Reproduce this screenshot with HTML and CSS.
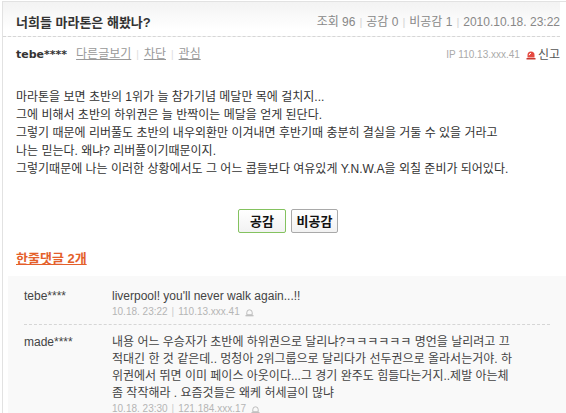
FILE: index.html
```html
<!DOCTYPE html>
<html lang="ko">
<head>
<meta charset="utf-8">
<title>너희들 마라톤은 해봤나?</title>
<link rel="stylesheet" href="styles.css">
</head>
<body>
<div class="page">
  <div class="head">
    <h1 class="title">너희들 마라톤은 해봤나?</h1>
    <div class="stats">조회 96<span class="sep">|</span>공감 0<span class="sep">|</span>비공감 1<span class="sep">|</span>2010.10.18. 23:22</div>
  </div>
  <div class="info">
    <div class="author"><b class="nick">tebe****</b><a class="lnk" href="#">다른글보기</a><span class="bar">|</span><a class="lnk" href="#">차단</a><span class="bar">|</span><a class="lnk" href="#">관심</a></div>
    <div class="ip">IP 110.13.xxx.41<svg class="siren" width="10" height="10" viewBox="0 0 10 10"><path d="M1.5 7.5V5a3.5 3.5 0 0 1 7 0v2.5z" fill="#e5483f"/><path d="M3.2 5.2a1.8 1.8 0 0 1 1.8-1.8" stroke="#fff" stroke-width="1" fill="none"/><rect x="0.5" y="8" width="9" height="1.5" fill="#c83a32"/></svg><a class="report" href="#">신고</a></div>
  </div>
  <div class="content">
    마라톤을 보면 초반의 1위가 늘 참가기념 메달만 목에 걸치지...<br>
    그에 비해서 초반의 하위권은 늘 반짝이는 메달을 얻게 된단다.<br>
    그렇기 때문에 리버풀도 초반의 내우외환만 이겨내면 후반기때 충분히 결실을 거둘 수 있을 거라고<br>
    나는 믿는다. 왜냐? 리버풀이기때문이지.<br>
    그렇기때문에 나는 이러한 상황에서도 그 어느 콥들보다 여유있게 Y.N.W.A을 외칠 준비가 되어있다.
  </div>
  <div class="vote">
    <button class="btn btn-agree" type="button">공감</button>
    <button class="btn btn-dis" type="button">비공감</button>
  </div>
  <div class="cmt-head"><a class="cmt-link" href="#">한줄댓글 2개</a></div>
  <div class="comments">
    <div class="cmt">
      <div class="cmt-name">tebe****</div>
      <div class="cmt-body">
        <p class="cmt-text">liverpool! you'll never walk again...!!</p>
        <div class="cmt-meta">10.18. 23:22<span class="msep">|</span>110.13.xxx.41<svg class="siren-s" width="9" height="9" viewBox="0 0 10 10"><path d="M2 7.5V5a3 3 0 0 1 6 0v2.5z" fill="none" stroke="#b5b5b5" stroke-width="1"/><rect x="0.5" y="8" width="9" height="1.2" fill="#b5b5b5"/></svg></div>
      </div>
    </div>
    <div class="cmt">
      <div class="cmt-name">made****</div>
      <div class="cmt-body">
        <p class="cmt-text">내용 어느 우승자가 초반에 하위권으로 달리냐?ㅋㅋㅋㅋㅋㅋ 명언을 날리려고 끄<br>적대긴 한 것 같은데.. 멍청아 2위그룹으로 달리다가 선두권으로 올라서는거야. 하<br>위권에서 뛰면 이미 페이스 아웃이다...그 경기 완주도 힘들다는거지..제발 아는체<br>좀 작작해라 . 요즘것들은 왜케 허세글이 많냐</p>
        <div class="cmt-meta">10.18. 23:30<span class="msep">|</span>121.184.xxx.17<svg class="siren-s" width="9" height="9" viewBox="0 0 10 10"><path d="M2 7.5V5a3 3 0 0 1 6 0v2.5z" fill="none" stroke="#b5b5b5" stroke-width="1"/><rect x="0.5" y="8" width="9" height="1.2" fill="#b5b5b5"/></svg></div>
      </div>
    </div>
  </div>
</div>
</body>
</html>
```

FILE: styles.css
```css
html, body {
  margin: 0;
  padding: 0;
  background: #fff;
  overflow: hidden;
}
body {
  font-family: "Liberation Sans", "Noto Sans CJK KR", sans-serif;
  font-size: 12px;
  color: #333;
}
.page {
  display: flex;
  flex-direction: column;
  margin-top: 1px;
  margin-left: 2px;
  border-top: 1px solid #e2e2e2;
  border-left: 1px solid #e2e2e2;
  height: 411px;
  overflow: hidden;
}
.head {
  display: flex;
  justify-content: space-between;
  align-items: center;
  margin: 0 6px 0 0;
  padding: 12px 0 5px 13px;
  border-bottom: 1px dashed #d6d6d6;
  background: linear-gradient(#f3f3f3, #fff 28px);
}
.title {
  margin: 0;
  font-size: 13px;
  font-weight: bold;
  line-height: 17px;
  color: #333;
}
.stats {
  font-size: 12px;
  line-height: 17px;
  color: #888;
}
.sep {
  color: #d4d4d4;
  margin: 0 4px;
  font-size: 11px;
}
.info {
  display: flex;
  justify-content: space-between;
  align-items: center;
  margin: 9px 6px 0 13px;
  line-height: 16px;
}
.nick {
  font-family: "DejaVu Sans", "Noto Sans CJK KR", sans-serif;
  font-size: 11px;
  color: #333;
  margin-right: 9px;
}
.lnk {
  color: #999;
  text-decoration: underline;
}
.bar {
  color: #ddd;
  font-size: 10px;
  margin: 0 5px;
}
.ip {
  display: flex;
  align-items: center;
  font-size: 10px;
  color: #aaa;
}
.siren {
  margin: 0 2px 0 6px;
}
.report {
  color: #555;
  text-decoration: none;
  font-size: 12px;
}
.content {
  margin: 25px 6px 0 13px;
  line-height: 18px;
  color: #333;
}
.vote {
  display: flex;
  justify-content: center;
  gap: 5px;
  margin-top: 31px;
  padding-left: 7px;
}
.btn {
  height: 24px;
  padding: 0;
  border: 1px solid #a9a9a9;
  border-radius: 2px;
  background: linear-gradient(#fff, #f2f2f2);
  font-family: "Noto Sans CJK KR", sans-serif;
  font-size: 13px;
  font-weight: bold;
  color: #111;
  line-height: 22px;
}
.btn-agree {
  width: 48px;
  border-color: #84c25f;
}
.btn-dis {
  width: 47px;
}
.cmt-head {
  margin: 18px 0 0 13px;
  line-height: 16px;
}
.cmt-link {
  color: #e4602b;
  font-size: 13px;
  font-weight: bold;
  text-decoration: underline;
}
.comments {
  flex: 1;
  margin: 9px 0 0 5px;
  background: #f9f9f9;
  padding: 12px 16px 0;
}
.cmt {
  display: flex;
  padding: 0 0 6px;
}
.cmt + .cmt {
  border-top: 1px dashed #d6d6d6;
  padding-top: 9px;
}
.cmt-name {
  width: 88px;
  flex: none;
  line-height: 17px;
  color: #444;
}
.cmt-body {
  flex: 1;
}
.cmt-text {
  margin: 0;
  line-height: 17px;
  color: #444;
}
.cmt-meta {
  display: flex;
  align-items: center;
  font-size: 10px;
  line-height: 12px;
  padding-top: 1px;
  color: #b5b5b5;
}
.msep {
  margin: 0 4px;
  color: #ccc;
}
.siren-s {
  margin-left: 5px;
}
```
